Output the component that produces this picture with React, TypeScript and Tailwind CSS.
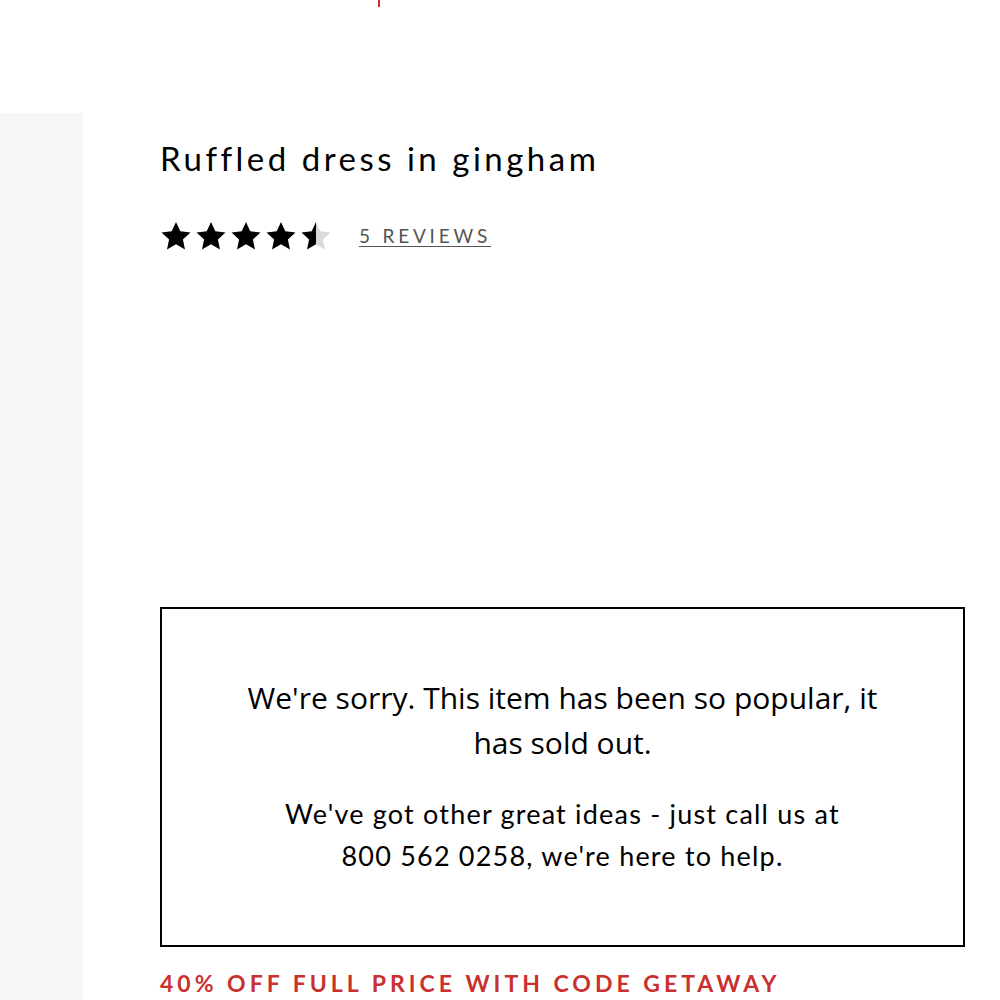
import React from "react";

const Star = ({ fill }: { fill: "full" | "half" }) => (
  <svg width="32" height="30" viewBox="0 0 24 23" className="shrink-0">
    <defs>
      <linearGradient id="half">
        <stop offset="50%" stopColor="#000" />
        <stop offset="50%" stopColor="#d9d9d9" />
      </linearGradient>
    </defs>
    <path
      d="M12 0.8l3.3 7.1 7.8 0.9-5.8 5.3 1.6 7.7L12 17.9l-6.9 3.9 1.6-7.7L0.9 8.8l7.8-0.9z"
      fill={fill === "full" ? "#000" : "url(#half)"}
    />
  </svg>
);

export default function App() {
  return (
    <div className="relative w-[1000px] h-[1000px] overflow-hidden bg-white" style={{ fontFamily: "Lato, 'Open Sans', sans-serif" }}>
      <div className="absolute left-[378px] top-0 w-[2px] h-[7px] bg-[#c8312f]" />
      <div className="flex pt-[113px] h-full">
        <div className="w-[83px] bg-[#f7f7f7] shrink-0" />
        <div className="pl-[77px] pt-[25px] flex flex-col">
          <h1 className="text-[33px] leading-[40px] text-black tracking-[3.5px] whitespace-nowrap">Ruffled dress in gingham</h1>
          <div className="flex items-center mt-[41px] h-[34px]">
            <div className="flex gap-[3px]">
              <Star fill="full" />
              <Star fill="full" />
              <Star fill="full" />
              <Star fill="full" />
              <Star fill="half" />
            </div>
            <a className="ml-[27px] text-[19px] text-[#555] underline underline-offset-[3px] tracking-[3.8px]">5 REVIEWS</a>
          </div>
          <div className="mt-[354px] w-[805px] h-[340px] border-2 border-black flex flex-col items-center pt-[66px] text-center text-black">
            <p className="text-[30px] leading-[45px] w-[650px]" style={{ fontFamily: "'Open Sans', sans-serif" }}>
              We're sorry. This item has been so popular, it has sold out.
            </p>
            <p className="text-[27px] leading-[42px] w-[580px] mt-[28px] tracking-[1.2px]">
              We've got other great ideas - just call us at 800 562 0258, we're here to help.
            </p>
          </div>
          <div className="mt-[19px] text-[23px] font-bold text-[#c8312f] tracking-[4px] whitespace-nowrap">40% OFF FULL PRICE WITH CODE GETAWAY</div>
        </div>
      </div>
    </div>
  );
}
